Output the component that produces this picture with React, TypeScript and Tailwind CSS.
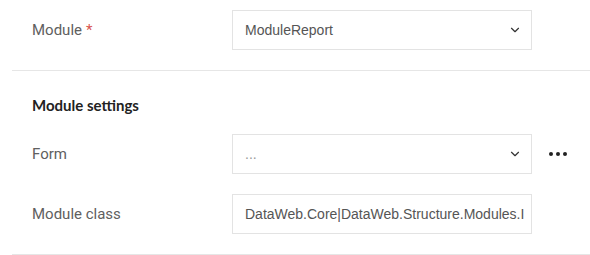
import { ChevronDown } from "lucide-react";

function SelectBox({ value, muted }: { value: string; muted?: boolean }) {
  return (
    <div className="flex h-10 w-[300px] items-center justify-between border border-[#e3e3e3] bg-white pl-3 pr-[9px]">
      <span
        className={`font-['Liberation_Sans',Arial,sans-serif] text-[14px] ${muted ? "text-[#9a9a9a]" : "text-[#555]"}`}
      >
        {value}
      </span>
      <ChevronDown className="h-[14px] w-[14px] text-[#333]" strokeWidth={2} />
    </div>
  );
}

function TextBox({ value }: { value: string }) {
  return (
    <div className="flex h-10 w-[300px] items-center overflow-hidden whitespace-nowrap border border-[#e3e3e3] bg-white pl-3">
      <span className="font-['Liberation_Sans',Arial,sans-serif] text-[14px] text-[#555]">{value}</span>
    </div>
  );
}

function Row({ label, required, children }: { label: string; required?: boolean; children: React.ReactNode }) {
  return (
    <div className="flex items-center pl-5">
      <div className="w-[200px] font-['Roboto',sans-serif] text-[15px] text-[#606060]">
        {label}
        {required && <span className="ml-1 text-[#d9534f]">*</span>}
      </div>
      {children}
    </div>
  );
}

export default function App() {
  return (
    <div className="h-[255px] w-[590px] overflow-hidden bg-white pl-3">
      <div className="border-b border-[#e6e6e6] pb-5 pt-[10px]">
        <Row label="Module" required>
          <SelectBox value="ModuleReport" />
        </Row>
      </div>

      <div className="border-b border-[#e6e6e6] pb-5 pt-6">
        <h3 className="pl-5 font-['Lato',sans-serif] text-[15px] font-bold leading-5 text-[#222]">
          Module settings
        </h3>
        <div className="mt-[19px] flex flex-col gap-5">
          <Row label="Form">
            <SelectBox value="..." muted />
            <button className="ml-[17px] flex items-center gap-[3px]">
              <span className="h-[4px] w-[4px] rounded-full bg-[#222]" />
              <span className="h-[4px] w-[4px] rounded-full bg-[#222]" />
              <span className="h-[4px] w-[4px] rounded-full bg-[#222]" />
            </button>
          </Row>
          <Row label="Module class">
            <TextBox value="DataWeb.Core|DataWeb.Structure.Modules.I" />
          </Row>
        </div>
      </div>
    </div>
  );
}
